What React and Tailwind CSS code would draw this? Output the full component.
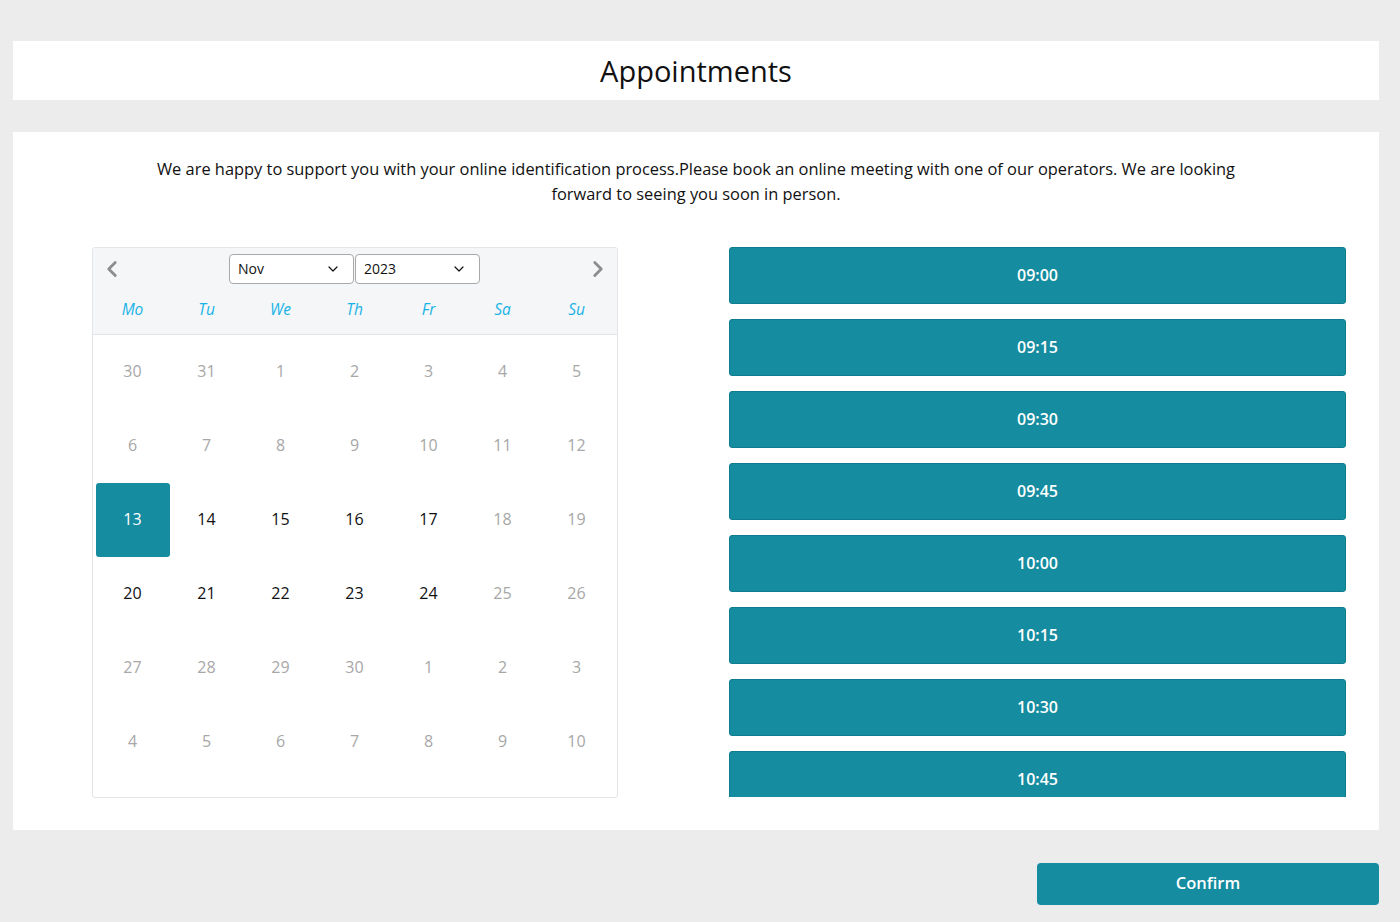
import { ChevronLeft, ChevronRight, ChevronDown } from 'lucide-react'

const DAYS = ['Mo', 'Tu', 'We', 'Th', 'Fr', 'Sa', 'Su']
const SLOTS = ['09:00', '09:15', '09:30', '09:45', '10:00', '10:15', '10:30', '10:45', '11:00', '11:15']

// [day, state] 0 = other/disabled, 1 = available, 2 = selected
const WEEKS = [
  [[30, 0], [31, 0], [1, 0], [2, 0], [3, 0], [4, 0], [5, 0]],
  [[6, 0], [7, 0], [8, 0], [9, 0], [10, 0], [11, 0], [12, 0]],
  [[13, 2], [14, 1], [15, 1], [16, 1], [17, 1], [18, 0], [19, 0]],
  [[20, 1], [21, 1], [22, 1], [23, 1], [24, 1], [25, 0], [26, 0]],
  [[27, 0], [28, 0], [29, 0], [30, 0], [1, 0], [2, 0], [3, 0]],
  [[4, 0], [5, 0], [6, 0], [7, 0], [8, 0], [9, 0], [10, 0]],
]

function Select({ value }) {
  return (
    <div className="w-[125px] h-[30px] bg-white border border-[#a9a9a9] rounded-[4px] flex items-center justify-between pl-2 pr-3 text-[14px] text-[#111]">
      <span>{value}</span>
      <ChevronDown size={16} strokeWidth={1.8} />
    </div>
  )
}

export default function App() {
  return (
    <div className="min-h-[922px] bg-[#ececec] pl-[13px] pr-[21px] pt-[41px] pb-[17px] text-[#111]" style={{ fontFamily: '"Open Sans", "Noto Sans", sans-serif' }}>
      {/* Header */}
      <div className="bg-white h-[59px] flex items-center justify-center">
        <h1 className="text-[29px] leading-none -mt-px">Appointments</h1>
      </div>

      {/* Main card */}
      <div className="bg-white mt-[32px] h-[698px] pt-[24px]">
        <p className="max-w-[1100px] mx-auto text-center text-[16.4px] leading-[25px]">
          We are happy to support you with your online identification process.Please book an online meeting with one of our operators. We are looking forward to seeing you soon in person.
        </p>

        <div className="grid grid-cols-2 mt-[41px]">
          {/* Calendar */}
          <div className="flex justify-center">
            <div className="w-[526px] h-[551px] border border-[#e3e5e8] rounded-[3px] bg-white overflow-hidden">
              <div className="bg-[#f5f6f8] border-b border-[#e3e5e8] h-[87px]">
                <div className="flex items-center justify-between h-[41px] pl-[6px] pr-[6px]">
                  <ChevronLeft size={26} strokeWidth={2.6} className="text-[#8d8d8d]" />
                  <div className="flex items-center gap-px">
                    <Select value="Nov" />
                    <Select value="2023" />
                  </div>
                  <ChevronRight size={26} strokeWidth={2.6} className="text-[#8d8d8d]" />
                </div>
                <div className="grid grid-cols-7 px-[3px] mt-[9px]">
                  {DAYS.map(d => (
                    <div key={d} className="text-center italic text-[15.5px] text-[#17b3e6]">{d}</div>
                  ))}
                </div>
              </div>
              <div className="px-[3px]">
                {WEEKS.map((w, i) => (
                  <div key={i} className="grid grid-cols-7">
                    {w.map(([d, a], j) => (
                      <div key={j} className={`h-[74px] flex items-center justify-center text-[16px] pb-[2px] ${a === 2 ? 'bg-[#158c9f] text-white rounded-[3px] h-[73px]' : a === 1 ? 'text-[#111]' : 'text-[#a7a7a7]'}`}>
                        {d}
                      </div>
                    ))}
                  </div>
                ))}
              </div>
            </div>
          </div>

          {/* Time slots */}
          <div className="px-[33px]">
            <div className="h-[550px] overflow-hidden flex flex-col gap-[15px]">
              {SLOTS.map(s => (
                <button key={s} className="shrink-0 h-[57px] w-full bg-[#158c9f] border border-[#0f7d90] rounded-[3px] text-white font-semibold text-[16px] pb-[2px]">
                  {s}
                </button>
              ))}
            </div>
          </div>
        </div>
      </div>

      {/* Footer */}
      <div className="flex justify-end mt-[33px]">
        <button className="w-[342px] h-[42px] bg-[#158c9f] rounded-[4px] text-white font-semibold text-[16.5px] pb-[2px]">
          Confirm
        </button>
      </div>
    </div>
  )
}
